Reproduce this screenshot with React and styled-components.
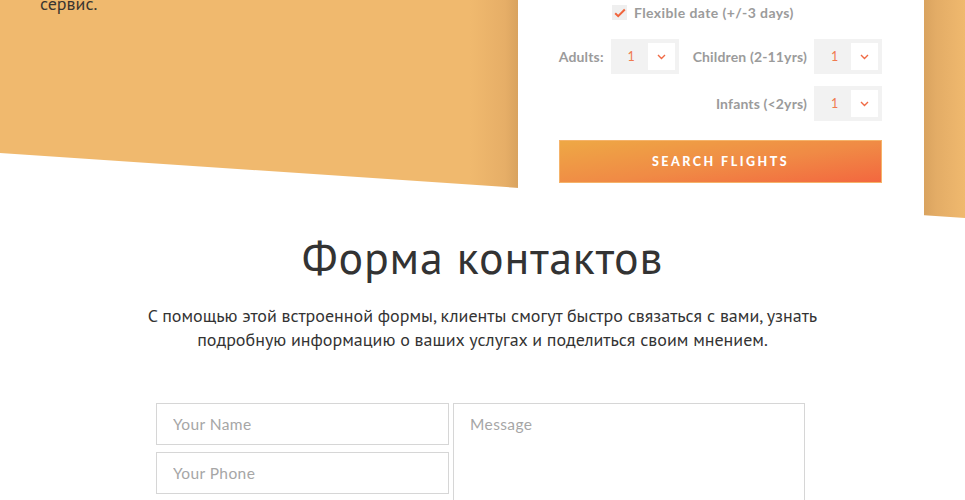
import React from "react";
import styled, { createGlobalStyle } from "styled-components";

const Global = createGlobalStyle`
  html, body { margin: 0; padding: 0; background: #fff; }
  body { width: 965px; height: 500px; overflow: hidden; }
  * { box-sizing: border-box; }
`;

const Page = styled.div`
  width: 965px;
  height: 500px;
  overflow: hidden;
  background: #fff;
`;

const Hero = styled.section`
  position: relative;
  height: 220px;
  display: flex;
  align-items: flex-start;
  &::before {
    content: "";
    position: absolute;
    inset: 0;
    z-index: 0;
    background: linear-gradient(
      to right,
      #f0b96e 0px,
      #f0b96e 470px,
      #e6ae67 505px,
      #d9a35f 518px,
      #d9a35f 924px,
      #e3ac66 936px,
      #f0b96e 965px
    );
    clip-path: polygon(0 0, 100% 0, 100% 218px, 0 153px);
  }
`;

const HeroText = styled.div`
  position: relative;
  width: 518px;
  padding-left: 40px;
  margin-top: -9px;
  font-family: "PT Sans", "Open Sans", sans-serif;
  font-size: 18px;
  line-height: 26px;
  color: #3a3530;
`;

const Card = styled.div`
  position: relative;
  width: 406px;
  height: 220px;
  background: #fff;
  padding: 5px 42px 0 41px;
  display: flex;
  flex-direction: column;
  font-family: Lato, "Open Sans", sans-serif;
`;

const CheckRow = styled.label`
  display: flex;
  align-items: center;
  gap: 7px;
  margin-left: 53px;
  height: 15px;
  font-size: 14px;
  letter-spacing: 0.4px;
  font-weight: 700;
  color: #9b9b9b;
`;

const CheckBox = styled.span`
  width: 15px;
  height: 15px;
  background: #efefef;
  display: flex;
  align-items: center;
  justify-content: center;
`;

const Row = styled.div`
  display: flex;
  justify-content: flex-end;
  align-items: center;
  gap: 14px;
  margin-top: ${(p) => p.$top}px;
`;

const Group = styled.div`
  display: flex;
  align-items: center;
  gap: 7px;
`;

const Label = styled.span`
  font-size: 14px;
  letter-spacing: 0.15px;
  font-weight: 700;
  color: #9b9b9b;
  white-space: nowrap;
`;

const Select = styled.div`
  width: 68px;
  height: 35px;
  background: #f2f2f2;
  display: flex;
  align-items: center;
  padding: 4px;
`;

const SelectValue = styled.span`
  flex: 1;
  text-align: center;
  font-size: 12.5px;
  color: #f07a4f;
`;

const Arrow = styled.span`
  width: 27px;
  height: 27px;
  background: #fff;
  display: flex;
  align-items: center;
  justify-content: center;
`;

const Button = styled.button`
  margin-top: 19px;
  width: 323px;
  height: 43px;
  border: 1px solid #f5b36a;
  background: linear-gradient(172deg, #eea845 0%, #f08a45 55%, #f3673f 100%);
  color: #fff;
  font-family: Lato, "Open Sans", sans-serif;
  font-weight: 900;
  font-size: 12.5px;
  letter-spacing: 2.5px;
  text-transform: uppercase;
  padding: 0;
  cursor: pointer;
`;

const Section = styled.section`
  display: flex;
  flex-direction: column;
  align-items: center;
  color: #333;
  font-family: "PT Sans", "Open Sans", sans-serif;
`;

const Title = styled.h2`
  margin: 10px 0 0;
  font-size: 46px;
  font-weight: 400;
  letter-spacing: 0.8px;
  line-height: 55px;
  color: #333;
`;

const Lead = styled.p`
  margin: 19px 0 0;
  width: 720px;
  text-align: center;
  font-size: 18px;
  line-height: 24px;
  color: #333;
`;

const Form = styled.form`
  align-self: flex-start;
  margin: 51px 0 0 156px;
  display: grid;
  grid-template-columns: 293px 352px;
  grid-template-rows: 42px 42px;
  column-gap: 4px;
  row-gap: 7px;
`;

const Field = styled.input`
  width: 100%;
  height: 42px;
  border: 1px solid #d6d6d6;
  padding: 0 16px;
  font-family: Lato, "Open Sans", sans-serif;
  font-size: 15.5px;
  letter-spacing: 0.4px;
  color: #555;
  outline: none;
  &::placeholder { color: #a6a6a6; }
`;

const Message = styled.textarea`
  grid-row: 1 / span 3;
  grid-column: 2;
  height: 140px;
  border: 1px solid #d6d6d6;
  padding: 11px 16px;
  font-family: Lato, "Open Sans", sans-serif;
  font-size: 15.5px;
  letter-spacing: 0.4px;
  resize: none;
  outline: none;
  &::placeholder { color: #a6a6a6; }
`;

const Chevron = () => (
  <svg width="9" height="6" viewBox="0 0 9 6" fill="none">
    <path d="M1 1l3.5 3.5L8 1" stroke="#f06a45" strokeWidth="1.4" />
  </svg>
);

const Check = () => (
  <svg width="12" height="10" viewBox="0 0 12 10" fill="none">
    <path d="M1.2 5.2l3 3L10.8 1.5" stroke="#f0643c" strokeWidth="2" />
  </svg>
);

const Counter = ({ label }) => (
  <Group>
    <Label>{label}</Label>
    <Select>
      <SelectValue>1</SelectValue>
      <Arrow>
        <Chevron />
      </Arrow>
    </Select>
  </Group>
);

export default function App() {
  return (
    <Page>
      <Global />
      <Hero>
        <HeroText>сервис.</HeroText>
        <Card>
          <CheckRow>
            <CheckBox>
              <Check />
            </CheckBox>
            Flexible date (+/-3 days)
          </CheckRow>
          <Row $top={19}>
            <Counter label="Adults:" />
            <Counter label="Children (2-11yrs)" />
          </Row>
          <Row $top={12}>
            <Counter label="Infants (<2yrs)" />
          </Row>
          <Button type="button">Search flights</Button>
        </Card>
      </Hero>
      <Section>
        <Title>Форма контактов</Title>
        <Lead>
          С помощью этой встроенной формы, клиенты смогут быстро связаться с вами, узнать
          подробную информацию о ваших услугах и поделиться своим мнением.
        </Lead>
        <Form>
          <Field placeholder="Your Name" />
          <Message placeholder="Message" />
          <Field placeholder="Your Phone" />
        </Form>
      </Section>
    </Page>
  );
}
